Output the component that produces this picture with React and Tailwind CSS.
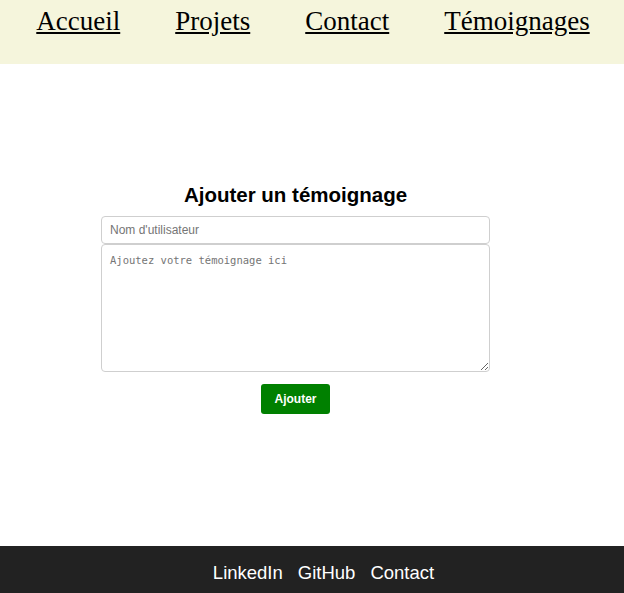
import React from "react";

export default function App() {
  return (
    <div className="min-h-screen flex flex-col bg-white">
      <header className="h-[64px] bg-[#f5f5dc] shrink-0">
        <nav className="flex justify-center gap-[55px] pt-[6px] pl-[2px]" style={{}}>
          {["Accueil", "Projets", "Contact", "Témoignages"].map((l) => (
            <a
              key={l}
              href="#"
              className="text-black underline text-[27px] leading-[31px] [font-family:'Liberation_Serif',serif]"
            >
              {l}
            </a>
          ))}
        </nav>
      </header>
      <main className="flex-1 pt-[119px]">
        <form
          className="w-[389px] ml-[101px] flex flex-col items-center [font-family:'Liberation_Sans',Arial,sans-serif]"
          onSubmit={(e) => e.preventDefault()}
        >
          <h2 className="text-[20.5px] leading-[24px] font-bold text-black">Ajouter un témoignage</h2>
          <input
            type="text"
            placeholder="Nom d'utilisateur"
            className="mt-[9px] w-full h-[28px] border border-[#cfcfcf] rounded-[4px] px-[8px] text-[12px] placeholder:text-[#757575] outline-none [font-family:'Liberation_Sans',Arial,sans-serif]"
          />
          <textarea
            placeholder="Ajoutez votre témoignage ici"
            className="mt-[0px] w-full h-[128px] border border-[#cfcfcf] rounded-[4px] px-[8px] pt-[9px] text-[10.5px] leading-[13px] placeholder:text-[#757575] outline-none [font-family:'DejaVu_Sans_Mono','Liberation_Mono',monospace]"
          />
          <button
            type="submit"
            className="mt-[12px] w-[69px] h-[30px] bg-[#008000] text-white text-[12px] font-bold rounded-[3px] [font-family:'Liberation_Sans',Arial,sans-serif]"
          >
            Ajouter
          </button>
        </form>
      </main>
      <footer className="h-[47px] bg-[#222222] shrink-0 flex justify-center gap-[15px] pt-[16px] pl-[23px] [font-family:'Liberation_Sans',Arial,sans-serif]">
        {["LinkedIn", "GitHub", "Contact"].map((l) => (
          <a key={l} href="#" className="text-white text-[18.5px] leading-[21px] no-underline">
            {l}
          </a>
        ))}
      </footer>
    </div>
  );
}
